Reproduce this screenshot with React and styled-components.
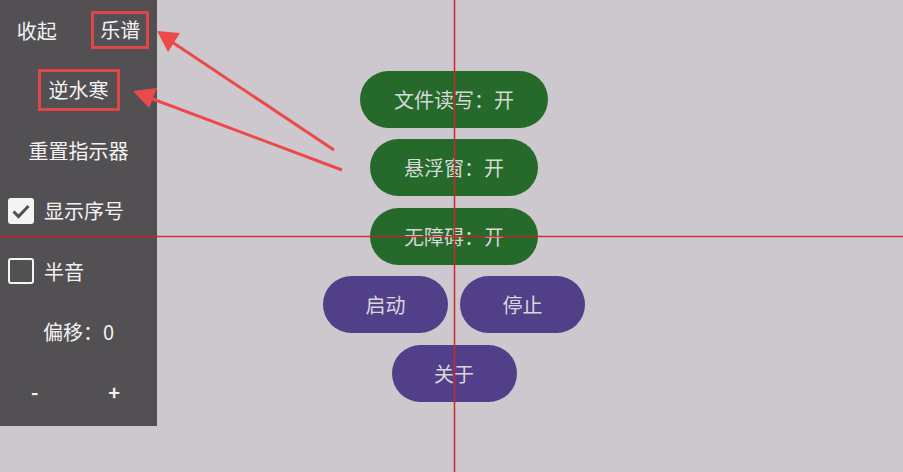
import React, { useState } from 'react';
import styled, { createGlobalStyle } from 'styled-components';

const GlobalStyle = createGlobalStyle`
  html, body {
    margin: 0;
    padding: 0;
    background: #cdc8cd;
    font-family: 'Noto Sans CJK SC', 'Noto Sans', sans-serif;
  }
`;

const Screen = styled.div`
  position: relative;
  width: 903px;
  height: 472px;
  overflow: hidden;
  background: #cdc8cd;
`;

const Main = styled.div`
  height: 100%;
  padding-left: 5px;
  box-sizing: border-box;
  display: flex;
  flex-direction: column;
  align-items: center;
  justify-content: center;
  gap: 11.5px;
`;

const Row = styled.div`
  display: flex;
  gap: 12px;
`;

const Pill = styled.button`
  width: ${p => p.$w}px;
  height: 57px;
  border: none;
  border-radius: 29px;
  background: ${p => (p.$kind === 'toggle' ? '#256a2b' : '#523f8a')};
  color: #d8d8d8;
  font-family: inherit;
  font-size: 20px;
  padding: 0;
  cursor: pointer;
`;

/* floating control window */
const Panel = styled.div`
  position: absolute;
  left: 0;
  top: 0;
  width: 157px;
  height: 426px;
  padding-bottom: 4px;
  box-sizing: border-box;
  background: #535053;
  display: grid;
  grid-template-rows: repeat(7, 1fr);
  color: #f2f2f2;
  font-size: 20px;
`;

const PanelRow = styled.div`
  display: flex;
  align-items: center;
  justify-content: ${p => p.$align || 'center'};
  padding: 0 ${p => p.$pr || 0}px 0 ${p => p.$pl || 0}px;
  gap: 10px;
`;

const Half = styled.div`
  flex: 1;
  display: flex;
  justify-content: center;
  align-items: center;
  font-weight: ${p => (p.$bold ? 700 : 400)};
`;

const Marked = styled.span`
  border: 3px solid #e04646;
  padding: ${p => p.$pad || '3px 6px'};
  line-height: 26px;
`;

const Box = styled.span`
  width: 26px;
  height: 26px;
  box-sizing: border-box;
  border: 2.5px solid #f4f4f4;
  border-radius: 3px;
  background: ${p => (p.$on ? '#f4f4f4' : 'transparent')};
  display: flex;
  align-items: center;
  justify-content: center;
`;

const Check = styled.label`
  display: flex;
  align-items: center;
  gap: 10px;
  cursor: pointer;
`;

const Overlay = styled.svg`
  position: absolute;
  inset: 0;
  pointer-events: none;
`;

function CheckItem({ label, on, onToggle }) {
  return (
    <Check onClick={onToggle}>
      <Box $on={on}>
        {on && (
          <svg width="22" height="22" viewBox="0 0 22 22">
            <path d="M3.5 11.5l5 5 10-10.5" fill="none" stroke="#535053" strokeWidth="3" />
          </svg>
        )}
      </Box>
      {label}
    </Check>
  );
}

export default function App() {
  const [showIndex, setShowIndex] = useState(true);
  const [semitone, setSemitone] = useState(false);
  const [offset, setOffset] = useState(0);

  return (
    <Screen>
      <GlobalStyle />
      <Main>
        <Pill $kind="toggle" $w={188}>文件读写：开</Pill>
        <Pill $kind="toggle" $w={168}>悬浮窗：开</Pill>
        <Pill $kind="toggle" $w={168}>无障碍：开</Pill>
        <Row>
          <Pill $w={125}>启动</Pill>
          <Pill $w={125}>停止</Pill>
        </Row>
        <Pill $w={125}>关于</Pill>
      </Main>

      <Panel>
        <PanelRow>
          <Half>收起</Half>
          <Half><Marked>乐谱</Marked></Half>
        </PanelRow>
        <PanelRow>
          <Marked $pad="5px 8px">逆水寒</Marked>
        </PanelRow>
        <PanelRow>重置指示器</PanelRow>
        <PanelRow $align="flex-start" $pl={8}>
          <CheckItem label="显示序号" on={showIndex} onToggle={() => setShowIndex(v => !v)} />
        </PanelRow>
        <PanelRow $align="flex-start" $pl={8}>
          <CheckItem label="半音" on={semitone} onToggle={() => setSemitone(v => !v)} />
        </PanelRow>
        <PanelRow>偏移：{offset}</PanelRow>
        <PanelRow $pr={8}>
          <Half $bold onClick={() => setOffset(o => o - 1)}>-</Half>
          <Half $bold onClick={() => setOffset(o => o + 1)}>+</Half>
        </PanelRow>
      </Panel>

      {/* guide lines and callout arrows */}
      <Overlay width="903" height="472">
        <line x1="454.5" y1="0" x2="454.5" y2="472" stroke="#d0262a" strokeWidth="1.5" />
        <line x1="0" y1="236.5" x2="903" y2="236.5" stroke="#c8232a" strokeWidth="1.5" opacity="0.9" />
        <line x1="334" y1="150" x2="172" y2="42" stroke="#ec4a4a" strokeWidth="3" />
        <polygon points="157,31 180,33 168,52" fill="#ec4a4a" />
        <line x1="342" y1="170" x2="150" y2="98" stroke="#ec4a4a" strokeWidth="3" />
        <polygon points="133,91 157,88 149,108" fill="#ec4a4a" />
      </Overlay>
    </Screen>
  );
}
